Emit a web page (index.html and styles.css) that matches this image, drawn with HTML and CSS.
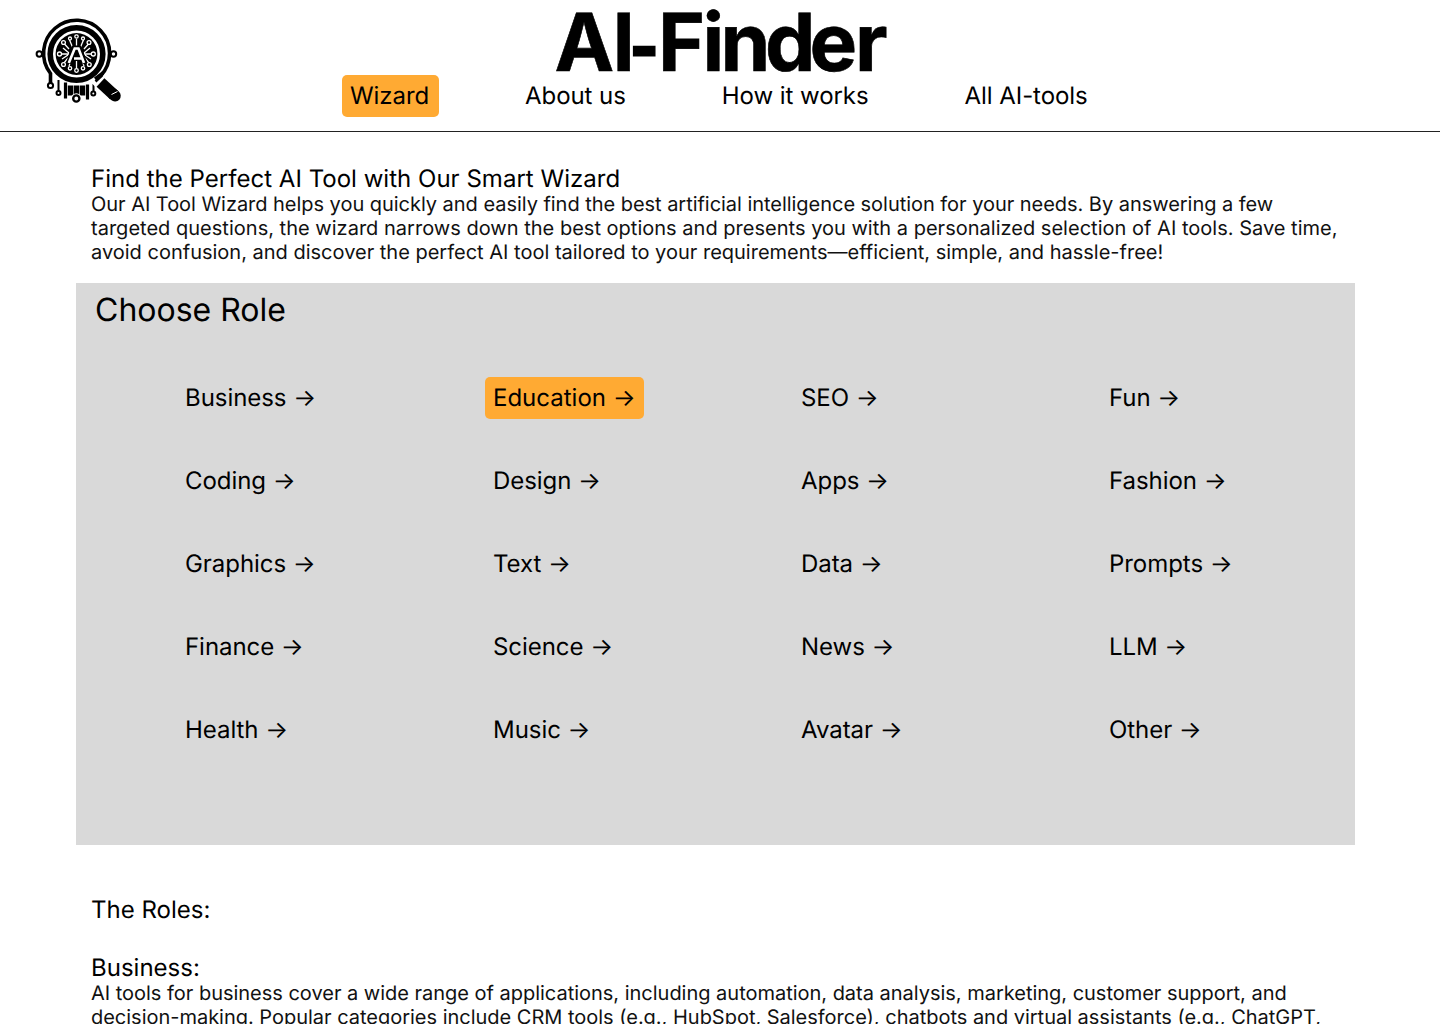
FILE: index.html
```html
<!DOCTYPE html>
<html lang="en">
<head>
<meta charset="utf-8">
<title>AI-Finder</title>
<link rel="stylesheet" href="styles.css">
</head>
<body>
<header class="header">
  <svg class="logo" viewBox="0 0 104 100" role="img" aria-label="AI-Finder logo">
    <g fill="none" stroke="#000">
      <path d="M22.500 73V63.500A33 33 0 1 1 72.500 66" stroke-width="3.600"/>
      <circle cx="48.500" cy="44" r="26.300" stroke-width="5.600"/>
      <path d="M30.500 70v11M65.500 74v7" stroke-width="2"/>
      <path d="M37.500 72.500v16M59.500 74.500v15" stroke-width="3.200"/>
      <path d="M42.500 75.500v10M48.500 75.500v10M54.500 75.500v10" stroke-width="5.400"/>
    </g>
    <circle cx="48.500" cy="44" r="20.900" fill="#000"/>
    <circle cx="48.300" cy="88.500" r="5.300" fill="#fff"/>
    <g fill="#fff" stroke="#000" stroke-width="2">
      <circle cx="11.300" cy="44" r="2.700"/><circle cx="85.500" cy="44" r="2.700"/>
      <circle cx="22.500" cy="75.500" r="2.600"/><circle cx="30.500" cy="83" r="2"/>
      <circle cx="65.300" cy="83.500" r="2"/><circle cx="48.300" cy="88.500" r="3.100" stroke-width="2.400"/>
    </g>
    <g stroke="#fff" stroke-width="1.300" fill="none">
      <path d="M48.500 37v-8M44.500 37l-3-7M52.500 37l3-7M41 39l-4.500-5M56 39l4.500-5M41 44h-7M56 44h7M42.500 52l-1.500 4M54.500 52l1.500 4M48.500 51v7M40 48l-4 5M57 48l4 5M41 43l-6-5M56 43l6-5M57 45l6 4M40 45l-6 4"/>
      <g fill="#000"><circle cx="48.500" cy="26.500" r="1.700"/><circle cx="42" cy="28.500" r="1.500"/><circle cx="55" cy="28.500" r="1.500"/><circle cx="35.500" cy="32.500" r="1.900"/><circle cx="61" cy="32.500" r="1.900"/><circle cx="31.500" cy="44" r="2"/><circle cx="65.300" cy="44" r="2"/><circle cx="35.500" cy="54.500" r="1.900"/><circle cx="61.300" cy="54.500" r="1.900"/><circle cx="42" cy="58.300" r="1.700"/><circle cx="55" cy="58.300" r="1.700"/><circle cx="48.500" cy="60.500" r="1.800"/></g>
    </g>
    <path d="M40.300 53.500L46 38h5L57 53.500M43 48.500h11" fill="none" stroke="#000" stroke-width="5"/>
    <path d="M40.800 53L46.700 38.500h3.800L56 53M46 48.500h8" fill="none" stroke="#fff" stroke-width="2.600"/>
    <path d="M67 68l8 8" stroke="#fff" stroke-width="12"/>
    <path d="M67 69l8-6" stroke="#000" stroke-width="3.500"/>
    <path d="M67.500 71.500l6.500-6" stroke="#000" stroke-width="2.500"/>
    <path d="M72.500 72.500L86 85" stroke="#000" stroke-width="11.500"/>
    <path d="M85 84l2 1.800" stroke="#000" stroke-width="11.500" stroke-linecap="round"/>
    <path d="M83.500 84.500l6-3" stroke="#fff" stroke-width="1"/>
  </svg>
  <div class="brand">
    <svg class="wordmark" viewBox="0 0 340 74"><text y="71" x="-0.500 57.500">AI<tspan class="dash" x="74.500" y="68.500">-</tspan><tspan y="71" x="103 147.500 165.500 210 254.500 300">Finder</tspan></text></svg>
    <nav class="nav">
      <a class="nav-link active">Wizard</a>
      <a class="nav-link">About us</a>
      <a class="nav-link">How it works</a>
      <a class="nav-link">All AI-tools</a>
    </nav>
  </div>
</header>
<main>
  <section class="copy intro">
    <h2>Find the Perfect AI Tool with Our Smart Wizard</h2>
    <p><span class="tight">Our AI Tool Wizard helps you quickly and easily find the best artificial intelligence solution for your needs. By answering a few</span><br><span class="loose">targeted questions, the wizard narrows down the best options and presents you with a personalized selection of AI tools. Save time,</span><br>avoid confusion, and discover the perfect AI tool tailored to your requirements—efficient, simple, and hassle-free!</p>
  </section>
  <section class="panel">
    <h1>Choose Role</h1>
    <div class="roles">
      <a class="role">Business →</a><a class="role active">Education →</a><a class="role">SEO →</a><a class="role">Fun →</a>
      <a class="role">Coding →</a><a class="role">Design →</a><a class="role">Apps →</a><a class="role">Fashion →</a>
      <a class="role">Graphics →</a><a class="role">Text →</a><a class="role">Data →</a><a class="role">Prompts →</a>
      <a class="role">Finance →</a><a class="role">Science →</a><a class="role">News →</a><a class="role">LLM →</a>
      <a class="role">Health →</a><a class="role">Music →</a><a class="role">Avatar →</a><a class="role">Other →</a>
    </div>
  </section>
  <section class="copy descriptions">
    <h2>The Roles:</h2>
    <h2 class="role-title">Business:</h2>
    <p class="role-text">AI tools for business cover a wide range of applications, including automation, data analysis, marketing, customer support, and<br>decision-making. Popular categories include CRM tools (e.g., HubSpot, Salesforce), chatbots and virtual assistants (e.g., ChatGPT,</p>
  </section>
</main>
</body>
</html>
```
FILE: styles.css
```css
* { box-sizing: border-box; }
html { overflow: hidden; }
body { margin: 0; height: 1024px; overflow: hidden; background: #fff; color: #000; font-family: Inter, sans-serif; text-rendering: geometricPrecision; }
h1, h2, p { margin: 0; font-weight: 400; }
.header { height: 132px; display: flex; align-items: flex-start; border-bottom: 1px solid #222; }
.logo { width: 104px; height: 100px; margin: 10px 0 0 28px; flex: none; }
.brand { margin-left: 210px; width: 770px; }
.wordmark { display: block; width: 340px; height: 74px; margin: 0 0 1px 213px; overflow: visible; font-size: 80px; font-weight: 750; stroke: #000; stroke-width: .6px; }
.dash { font-size: 62px; font-weight: 900; stroke-width: 1.5px; }
.nav { display: flex; gap: 80px; }
.nav-link { flex: none; height: 42px; padding: 0 8px; font-size: 24px; line-height: 42px; letter-spacing: -.06px; white-space: nowrap; border-radius: 5px; }
.nav-link.active { width: 97px; margin-right: -2px; background: #ffaa33; }
.copy { margin-left: 91px; white-space: nowrap; color: #111; }
.copy h2 { font-size: 24px; line-height: 29px; color: #000; }
.copy p { margin-top: -1px; font-size: 20px; line-height: 24px; }
.tight { letter-spacing: -.036px; }
.loose { letter-spacing: .016px; }
.intro { padding-top: 32px; height: 151px; }
.intro h2 { letter-spacing: .02px; }
.panel { margin-left: 76px; width: 1279px; height: 562px; background: #d9d9d9; padding: 7px 0 0 19px; }
.panel h1 { font-size: 32px; line-height: 39px; }
.roles { display: grid; grid-template-columns: repeat(4, 308px); grid-auto-rows: 83px; margin: 48px 0 0 82px; }
.role { justify-self: start; height: 42px; padding: 0 8px; font-size: 24px; line-height: 42px; letter-spacing: -.05px; border-radius: 5px; white-space: nowrap; }
.role.active { letter-spacing: 0; background: #ffaa33; }
.descriptions { padding-top: 50px; }
.role-title { margin-top: 29px; }
.copy .role-text { letter-spacing: -.016px; }
```
